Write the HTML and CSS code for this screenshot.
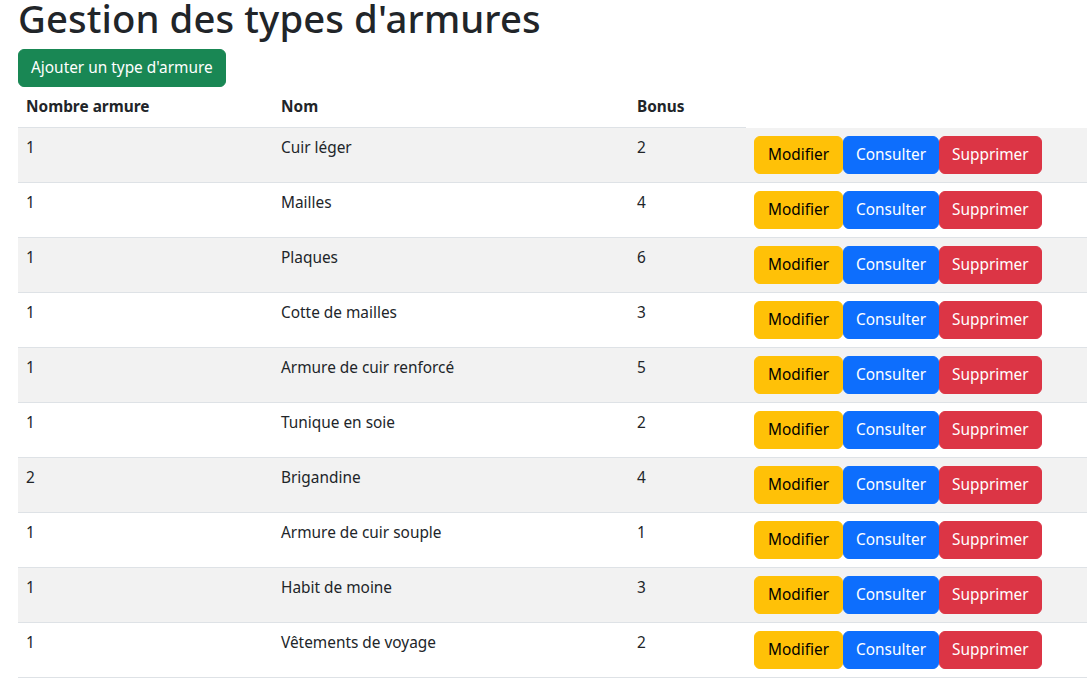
FILE: index.html
```html
<!DOCTYPE html>
<html lang="fr">
<head>
<meta charset="utf-8">
<title>Gestion des types d'armures</title>
<link rel="stylesheet" href="styles.css">
</head>
<body>
<div class="container">
  <h1 class="title">Gestion des types d'armures</h1>
  <div class="toolbar"><a class="btn btn-success" href="#">Ajouter un type d'armure</a></div>
  <table class="table">
    <colgroup><col class="c1"><col class="c2"><col class="c3"><col class="c4"></colgroup>
    <thead>
      <tr><th>Nombre armure</th><th>Nom</th><th>Bonus</th></tr>
    </thead>
    <tbody>
      <tr><td>1</td><td>Cuir léger</td><td>2</td><td><div class="actions"><a class="btn btn-warning" href="#">Modifier</a><a class="btn btn-primary" href="#">Consulter</a><a class="btn btn-danger" href="#">Supprimer</a></div></td></tr>
      <tr><td>1</td><td>Mailles</td><td>4</td><td><div class="actions"><a class="btn btn-warning" href="#">Modifier</a><a class="btn btn-primary" href="#">Consulter</a><a class="btn btn-danger" href="#">Supprimer</a></div></td></tr>
      <tr><td>1</td><td>Plaques</td><td>6</td><td><div class="actions"><a class="btn btn-warning" href="#">Modifier</a><a class="btn btn-primary" href="#">Consulter</a><a class="btn btn-danger" href="#">Supprimer</a></div></td></tr>
      <tr><td>1</td><td>Cotte de mailles</td><td>3</td><td><div class="actions"><a class="btn btn-warning" href="#">Modifier</a><a class="btn btn-primary" href="#">Consulter</a><a class="btn btn-danger" href="#">Supprimer</a></div></td></tr>
      <tr><td>1</td><td>Armure de cuir renforcé</td><td>5</td><td><div class="actions"><a class="btn btn-warning" href="#">Modifier</a><a class="btn btn-primary" href="#">Consulter</a><a class="btn btn-danger" href="#">Supprimer</a></div></td></tr>
      <tr><td>1</td><td>Tunique en soie</td><td>2</td><td><div class="actions"><a class="btn btn-warning" href="#">Modifier</a><a class="btn btn-primary" href="#">Consulter</a><a class="btn btn-danger" href="#">Supprimer</a></div></td></tr>
      <tr><td>2</td><td>Brigandine</td><td>4</td><td><div class="actions"><a class="btn btn-warning" href="#">Modifier</a><a class="btn btn-primary" href="#">Consulter</a><a class="btn btn-danger" href="#">Supprimer</a></div></td></tr>
      <tr><td>1</td><td>Armure de cuir souple</td><td>1</td><td><div class="actions"><a class="btn btn-warning" href="#">Modifier</a><a class="btn btn-primary" href="#">Consulter</a><a class="btn btn-danger" href="#">Supprimer</a></div></td></tr>
      <tr><td>1</td><td>Habit de moine</td><td>3</td><td><div class="actions"><a class="btn btn-warning" href="#">Modifier</a><a class="btn btn-primary" href="#">Consulter</a><a class="btn btn-danger" href="#">Supprimer</a></div></td></tr>
      <tr><td>1</td><td>Vêtements de voyage</td><td>2</td><td><div class="actions"><a class="btn btn-warning" href="#">Modifier</a><a class="btn btn-primary" href="#">Consulter</a><a class="btn btn-danger" href="#">Supprimer</a></div></td></tr>
    </tbody>
  </table>
</div>
</body>
</html>
```
FILE: styles.css
```css
html, body {
  margin: 0;
  padding: 0;
  overflow: hidden;
}
body {
  font-family: "Noto Sans", "Open Sans", sans-serif;
  font-size: 15.4px;
  line-height: 24px;
  color: #212529;
  background: #fff;
}
.container {
  padding: 0 0 0 18px;
}
.title {
  margin: 0 0 13px;
  font-size: 38.3px;
  line-height: 36px;
  font-weight: 500;
  letter-spacing: 0.1px;
}
.toolbar {
  display: flex;
}
.btn {
  display: inline-block;
  padding: 6px 12px;
  font-size: 15.4px;
  line-height: 24px;
  border: 1px solid transparent;
  border-radius: 6px;
  text-decoration: none;
  white-space: nowrap;
}
.btn-success { background: #198754; border-color: #198754; color: #fff; }
.btn-warning { background: #ffc107; border-color: #ffc107; color: #000; padding: 6px 13px; }
.btn-primary { background: #0d6efd; border-color: #0d6efd; color: #fff; }
.btn-danger  { background: #dc3545; border-color: #dc3545; color: #fff; }
.table {
  border-collapse: collapse;
  table-layout: fixed;
  width: 1130px;
}
.c1 { width: 255px; }
.c2 { width: 356px; }
.c3 { width: 117px; }
.c4 { width: 402px; }
.table th,
.table td {
  padding: 8px;
  text-align: left;
  vertical-align: top;
  border-bottom: 1px solid #dee2e6;
}
.table th {
  font-weight: 700;
}
.table tbody tr:nth-child(odd) td {
  background: #f2f2f2;
}
.actions {
  display: flex;
  white-space: nowrap;
}
.actions .btn {
  flex: none;
}
```
